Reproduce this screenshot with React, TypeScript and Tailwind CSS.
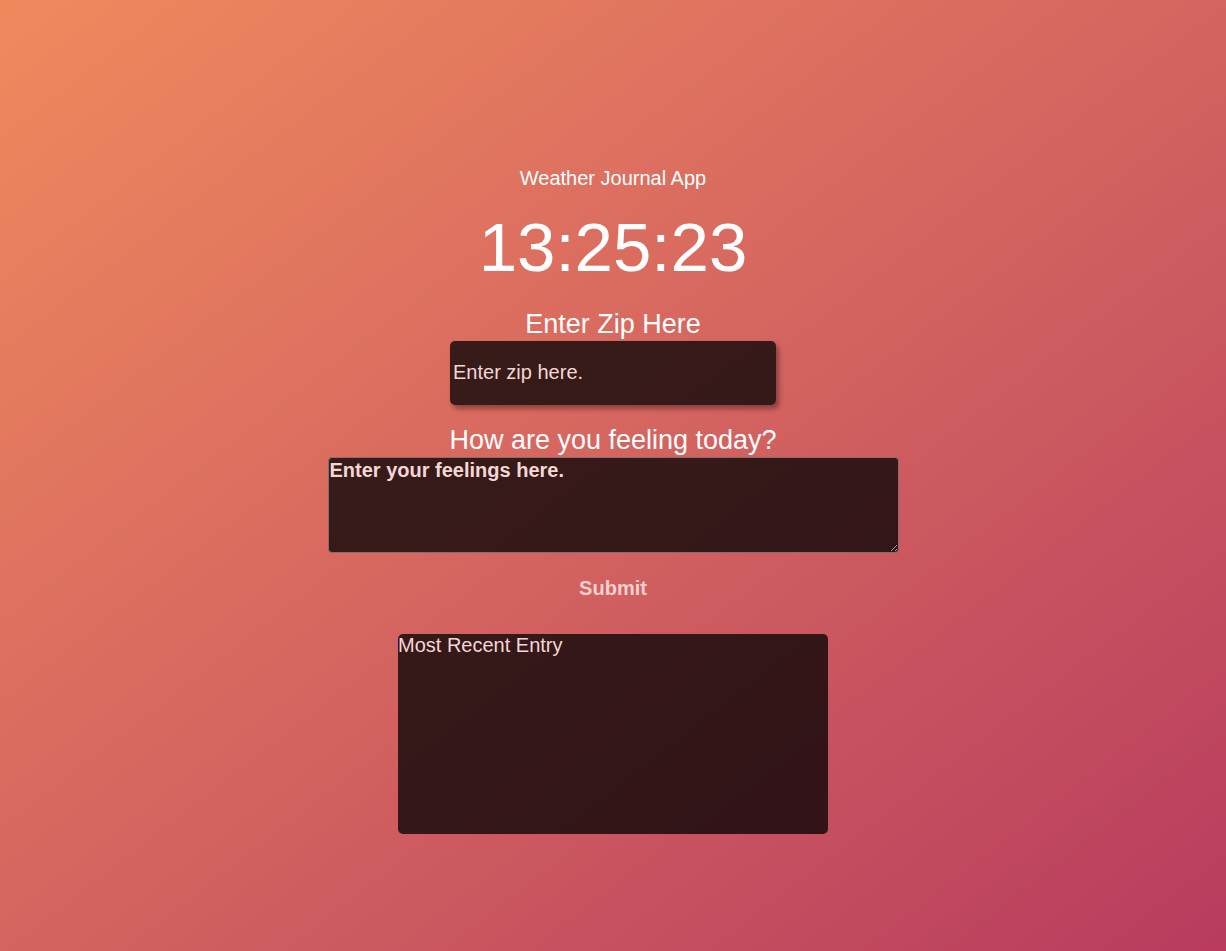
import React from "react";

export default function App() {
  return (
    <div
      className="w-full h-[951px] bg-linear-to-br from-[#f08a5d] to-[#b83b5e] flex flex-col items-center text-white"
      style={{ fontFamily: '"Liberation Sans", Arial, sans-serif' }}
    >
      <div className="mt-[167px] text-[20px] leading-[23px]">Weather Journal App</div>
      <div className="mt-[16px] text-[69px] leading-[83px]">13:25:23</div>
      <label className="mt-[20px] text-[27px] leading-[31px]">Enter Zip Here</label>
      <input
        type="text"
        placeholder="Enter zip here."
        className="mt-[1px] w-[326px] h-[64px] rounded-[5px] bg-black/75 px-[3px] pb-[2px] text-[20px] text-[#f5d6d6] placeholder:text-[#f5d6d6] outline-none shadow-[3px_4px_5px_rgba(0,0,0,0.35)]"
      />
      <label className="mt-[20px] text-[27px] leading-[31px]">How are you feeling today?</label>
      <textarea
        placeholder="Enter your feelings here."
        className="mt-[1px] w-[571px] h-[96px] rounded-[4px] border border-[#8a6c6c] bg-black/75 px-px py-px text-[20px] leading-[23px] font-bold text-[#f5d6d6] placeholder:text-[#f5d6d6] outline-none"
      />
      <button className="mt-[24px] text-[20px] leading-[23px] font-bold text-[#f3d0d0]">Submit</button>
      <div className="mt-[34px] w-[430px] h-[200px] rounded-[5px] bg-black/75 text-[20px] leading-[23px] text-[#f5d6d6]">
        Most Recent Entry
      </div>
    </div>
  );
}
